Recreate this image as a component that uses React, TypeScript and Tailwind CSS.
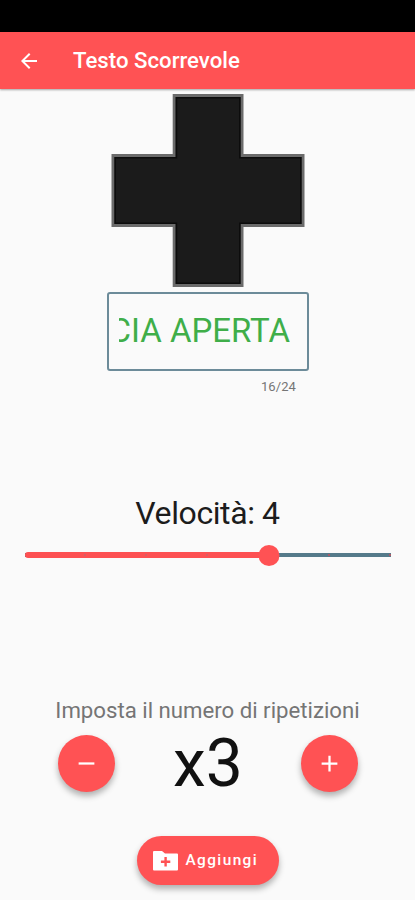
import { useState } from "react";
import { MdAdd, MdArrowBack, MdRemove } from "react-icons/md";

const MAX_LENGTH = 24;
const MAX_SPEED = 6;

const PharmacyCross = () => (
  <svg width="194" height="194" viewBox="0 0 194 194" className="ml-[111px] block">
    <path
      d="M63.2 1.5H131V61.5H192V131.5H131V191.5H63.2V131.5H2V61.5H63.2Z"
      fill="#1b1b1b"
      stroke="#6b6b6b"
      strokeWidth="3"
    />
    <path
      d="M65.4 3.7H128.8V63.7H189.8V129.3H128.8V189.3H65.4V129.3H4.2V63.7H65.4Z"
      fill="none"
      stroke="#0c0c0c"
      strokeWidth="1.5"
    />
  </svg>
);

const NewFolderIcon = () => (
  <svg width="25" height="20" viewBox="0 0 25 20" fill="currentColor">
    <path
      fillRule="evenodd"
      d="M1 0H9L12 2.6H24Q25 2.6 25 3.6V18.4Q25 19.4 24 19.4H1Q0 19.4 0 18.4V1Q0 0 1 0ZM11.4 6V9.5H7.9V11.9H11.4V15.4H13.8V11.9H17.3V9.5H13.8V6Z"
    />
  </svg>
);

const SpeedSlider = ({ value }: { value: number }) => {
  const percent = `${(value / MAX_SPEED) * 100}%`;
  const ticks = Array.from({ length: MAX_SPEED }, (_, i) => i + 1);

  return (
    <div className="relative mr-6 ml-[25px] flex h-[22px] items-center">
      <div className="flex h-1 w-full items-center bg-[#557a8a]">
        <div className="h-1.5 shrink-0 rounded-l-full bg-[#fd5052]" style={{ width: percent }} />
      </div>
      {ticks.map((tick) => (
        <div
          key={tick}
          className={`absolute top-[10px] h-0.5 w-0.5 -translate-x-full rounded-full ${
            tick > value ? "bg-[#c5525c]" : "bg-[#c5666c]"
          }`}
          style={{ left: `${(tick / MAX_SPEED) * 100}%` }}
        />
      ))}
      <div
        className="absolute top-[1px] h-[21px] w-[21px] -translate-x-1/2 rounded-full bg-[#ff5254]"
        style={{ left: percent }}
      />
    </div>
  );
};

export default function App() {
  const [text] = useState("FARMACIA APERTA ");
  const [speed] = useState(4);
  const [repeat, setRepeat] = useState(3);

  return (
    <div className="flex h-[900px] w-[415px] flex-col overflow-hidden bg-[#fafafa] font-['Roboto',sans-serif]">
      <div className="h-8 shrink-0 bg-black" />
      <header className="flex h-[57px] shrink-0 items-center bg-[#ff5254] pl-[17px] text-white shadow-[0_1px_2px_rgba(0,0,0,0.35)]">
        <button aria-label="Indietro">
          <MdArrowBack className="h-6 w-6" />
        </button>
        <h1 className="ml-8 text-[22.2px] leading-none font-medium">Testo Scorrevole</h1>
      </header>

      <main className="flex flex-col pt-[5px]">
        <PharmacyCross />

        <div className="mt-1 ml-[107px] flex h-[79px] w-[202px] items-center rounded-[3px] border-2 border-[#6c8b99] px-[10px] pb-0.5">
          <div className="flex w-[171px] justify-end overflow-hidden">
            <span className="text-[33px] leading-[38px] whitespace-nowrap text-[#3fae49]">{text.trim()}</span>
          </div>
        </div>
        <p className="mt-2 mr-[119px] text-right text-[13px] leading-4 tracking-[0.1px] text-[#757575]">
          {text.length}/{MAX_LENGTH}
        </p>

        <p className="mt-[100px] text-center text-[32px] leading-[36px] tracking-[-0.4px] text-[#1c1c1c]">
          Velocità: {speed}
        </p>
        <div className="mt-[13px]">
          <SpeedSlider value={speed} />
        </div>

        <p className="mt-[131px] text-center text-[22.2px] leading-[26px] whitespace-nowrap text-[#757575]">
          Imposta il numero di ripetizioni
        </p>
        <div className="mt-3 flex h-[57px] items-center justify-between pr-[57px] pl-[58px]">
          <button
            aria-label="Meno"
            onClick={() => setRepeat(Math.max(1, repeat - 1))}
            className="flex h-[57px] w-[57px] items-center justify-center rounded-full bg-[#ff5254] text-white shadow-[0_4px_6px_rgba(0,0,0,0.3)]"
          >
            <MdRemove className="h-[29px] w-[29px] p-px" />
          </button>
          <span className="text-[66px] leading-none text-[#111]">x{repeat}</span>
          <button
            aria-label="Più"
            onClick={() => setRepeat(repeat + 1)}
            className="flex h-[57px] w-[57px] items-center justify-center rounded-full bg-[#ff5254] text-white shadow-[0_4px_6px_rgba(0,0,0,0.3)]"
          >
            <MdAdd className="h-[29px] w-[29px] p-px" />
          </button>
        </div>

        <button className="mx-auto mt-11 flex h-[49px] w-[142px] items-center rounded-full bg-[#ff5254] pl-4 text-white shadow-[0_4px_6px_rgba(0,0,0,0.3)]">
          <NewFolderIcon />
          <span className="ml-2 text-[15.4px] font-medium tracking-[1.4px]">Aggiungi</span>
        </button>
      </main>
    </div>
  );
}
